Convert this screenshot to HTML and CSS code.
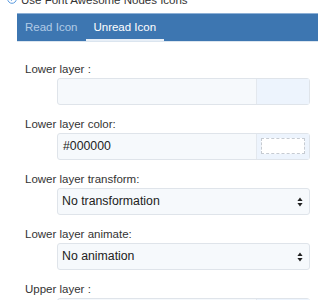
FILE: index.html
```html
<!DOCTYPE html>
<html>
<head>
<meta charset="utf-8">
<link rel="stylesheet" href="styles.css">
</head>
<body>
<div class="top">
  <svg class="check" width="10" height="10" viewBox="0 0 10 10"><circle cx="5" cy="5" r="4.3" fill="none" stroke="#5b9be0" stroke-width="1"/><path d="M3 5.1 L4.5 6.5 L7.1 3.7" fill="none" stroke="#5b9be0" stroke-width="1"/></svg>
  <span>Use Font Awesome Nodes Icons</span>
</div>
<div class="tabs">
  <div class="tab">Read Icon</div>
  <div class="tab active">Unread Icon</div>
</div>
<div class="panel">
  <div class="group">
    <div class="label">Lower layer :</div>
    <div class="control split"><div class="field"></div><div class="addon"></div></div>
  </div>
  <div class="group">
    <div class="label">Lower layer color:</div>
    <div class="control split"><div class="field text">#000000</div><div class="addon"><div class="swatch"></div></div></div>
  </div>
  <div class="group">
    <div class="label">Lower layer transform:</div>
    <div class="control select"><span>No transformation</span>
      <svg class="arrows" width="6" height="10" viewBox="0 0 6 10"><path d="M3 0.5 L5.6 4 L0.4 4 Z M3 9.5 L5.6 6 L0.4 6 Z" fill="#222"/></svg></div>
  </div>
  <div class="group">
    <div class="label">Lower layer animate:</div>
    <div class="control select"><span>No animation</span>
      <svg class="arrows" width="6" height="10" viewBox="0 0 6 10"><path d="M3 0.5 L5.6 4 L0.4 4 Z M3 9.5 L5.6 6 L0.4 6 Z" fill="#222"/></svg></div>
  </div>
  <div class="group">
    <div class="label">Upper layer :</div>
    <div class="control split"><div class="field"></div><div class="addon"></div></div>
  </div>
</div>
</body>
</html>
```
FILE: styles.css
```css
html, body {
  margin: 0;
  padding: 0;
  background: #ffffff;
  font-family: "Liberation Sans", Arial, sans-serif;
  color: #333333;
  overflow: hidden;
}
.top {
  margin-top: -8px;
  height: 21px;
  padding-left: 7px;
  display: flex;
  align-items: flex-start;
  font-size: 11.5px;
  line-height: 16px;
  color: #333;
}
.check {
  margin-top: 2px;
  margin-right: 4px;
}
.tabs {
  margin-left: 17px;
  height: 27px;
  background: #3d76b1;
  border-top: 1px solid #8db0d6;
  border-bottom: 1px solid #dbe5ef;
  display: flex;
  font-size: 11.5px;
}
.tab {
  padding: 0 9px 0 8px;
  line-height: 27px;
  color: #b2cbe6;
  box-sizing: border-box;
  height: 27px;
}
.tab.active {
  color: #ffffff;
  padding: 0 8px 0 7px;
  border-bottom: 2px solid #e8eff7;
  line-height: 27px;
}
.panel {
  margin-left: 17px;
  padding-top: 20px;
}
.group {
  margin-bottom: 12px;
}
.label {
  padding-left: 8px;
  font-size: 11.5px;
  line-height: 14px;
  height: 14px;
  margin-bottom: 2px;
  color: #333;
}
.control {
  margin-left: 40px;
  width: 253px;
  height: 27px;
  box-sizing: border-box;
  border: 1px solid #dfe4ea;
  border-radius: 3px;
  background: #f6f9fc;
  font-size: 12.3px;
  color: #222;
}
.split {
  display: flex;
}
.field {
  flex: 1;
  line-height: 25px;
}
.field.text {
  padding-left: 5px;
}
.addon {
  width: 53px;
  border-left: 1px solid #e3e8ee;
  background: #edf4fd;
  padding: 4px 4px 0 4px;
  box-sizing: border-box;
}
.swatch {
  height: 16px;
  border: 1px dashed #c6cbd2;
  background: #ffffff;
  box-sizing: border-box;
}
.select {
  display: flex;
  align-items: center;
  justify-content: space-between;
  padding: 0 6px 0 4px;
  line-height: 25px;
}
.arrows {
  display: block;
}
```
